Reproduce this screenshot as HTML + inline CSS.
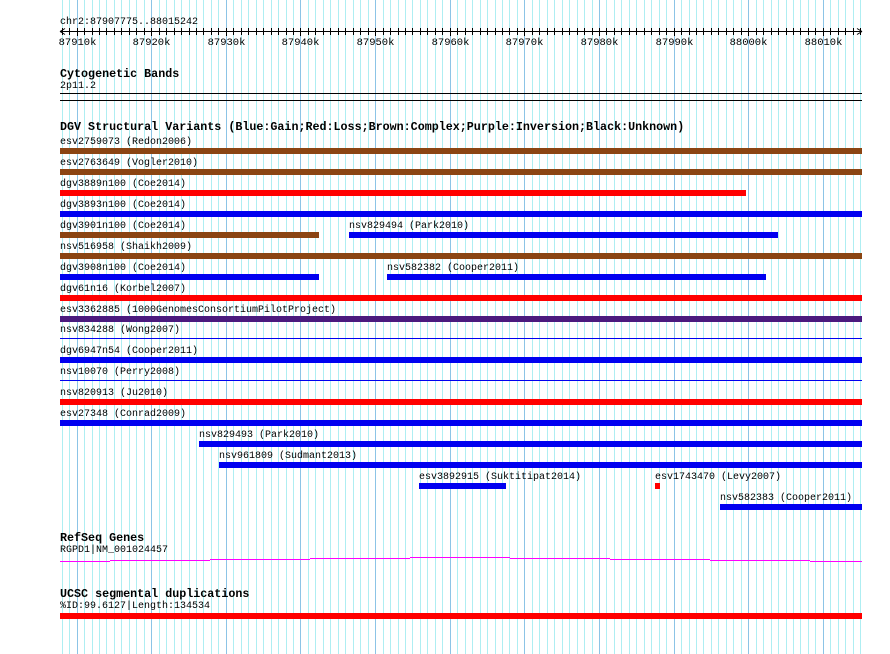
<!DOCTYPE html>
<html><head><meta charset="utf-8">
<style>
html,body{margin:0;padding:0;background:#fff;width:890px;height:654px;overflow:hidden}
#c{position:relative;width:890px;height:654px}
.t{position:absolute;font-family:"Liberation Mono",monospace;font-size:10px;line-height:11px;color:#000;white-space:nowrap;left:60px}
.h{position:absolute;font-family:"Liberation Mono",monospace;font-size:11.7px;font-weight:bold;line-height:12px;color:#000;white-space:nowrap;left:60px}
.b{position:absolute;height:6px}
.l{position:absolute;background:#000}
svg{position:absolute;left:0;top:0}
</style></head><body><div id="c">
<svg id="g" width="890" height="654"></svg>
<div class="t" style="top:17px">chr2:87907775..88015242</div>
<div class="h" style="top:68px">Cytogenetic Bands</div>
<div class="t" style="top:81px">2p11.2</div>
<div class="l" style="left:60px;width:802px;top:93px;height:1px"></div>
<div class="l" style="left:60px;width:802px;top:100px;height:1px"></div>
<div class="h" style="top:121px">DGV Structural Variants (Blue:Gain;Red:Loss;Brown:Complex;Purple:Inversion;Black:Unknown)</div>
<div id="rows"></div>
<div class="h" style="top:532px">RefSeq Genes</div>
<div class="t" style="top:545px">RGPD1|NM_001024457</div>
<div class="h" style="top:588px">UCSC segmental duplications</div>
<div class="t" style="top:601px">%ID:99.6127|Length:134534</div>
<div class="b" style="left:60px;width:802px;top:613px;background:#f00"></div>
</div>
<script>
var g=document.getElementById('g');
function X(bp){return 60+(bp-87907775)*802/107467;}
var s='';
for(var k=87908;k<=88015;k++){var x=Math.round(X(k*1000))+0.5;var maj=(k%10==0);
s+='<line x1="'+x+'" y1="0" x2="'+x+'" y2="654" stroke="'+(maj?'#8cc4e6':'#aeeef2')+'" stroke-width="1"/>';}
s+='<line x1="60" y1="31.5" x2="862" y2="31.5" stroke="#000"/>';
s+='<path d="M60 31.5 L65 28.5 M60 31.5 L65 34.5 M862 31.5 L857 28.5 M862 31.5 L857 34.5" stroke="#000" fill="none"/>';
for(var k=87908;k<=88015;k++){var x=Math.round(X(k*1000))+0.5;var maj=(k%10==0);
s+='<line x1="'+x+'" y1="28" x2="'+x+'" y2="'+(maj?36:35)+'" stroke="#000"/>';
if(maj){s+='<text x="'+x+'" y="45" text-anchor="middle" font-family="Liberation Mono, monospace" font-size="10.5">'+k+'k</text>';}}
var segs=[[60,110,561],[110,210,560],[210,310,559],[310,410,558],[410,510,557],[510,610,558],[610,710,559],[710,810,560],[810,862,561]];
segs.forEach(function(a){s+='<line x1="'+a[0]+'" y1="'+(a[2]+0.5)+'" x2="'+a[1]+'" y2="'+(a[2]+0.5)+'" stroke="#f0f"/>';});
g.innerHTML=s;
var B='#0000f0',R='#f00',N='#8b4513',P='#4b1a7e';
var rows=[
[[60,862,N,'esv2759073 (Redon2006)']],
[[60,862,N,'esv2763649 (Vogler2010)']],
[[60,746,R,'dgv3889n100 (Coe2014)']],
[[60,862,B,'dgv3893n100 (Coe2014)']],
[[60,319,N,'dgv3901n100 (Coe2014)'],[349,778,B,'nsv829494 (Park2010)']],
[[60,862,N,'nsv516958 (Shaikh2009)']],
[[60,319,B,'dgv3908n100 (Coe2014)'],[387,766,B,'nsv582382 (Cooper2011)']],
[[60,862,R,'dgv61n16 (Korbel2007)']],
[[60,862,P,'esv3362885 (1000GenomesConsortiumPilotProject)']],
[[60,862,'thin','nsv834288 (Wong2007)']],
[[60,862,B,'dgv6947n54 (Cooper2011)']],
[[60,862,'thin','nsv10070 (Perry2008)']],
[[60,862,R,'nsv820913 (Ju2010)']],
[[60,862,B,'esv27348 (Conrad2009)']],
[[199,862,B,'nsv829493 (Park2010)']],
[[219,862,B,'nsv961809 (Sudmant2013)']],
[[419,506,B,'esv3892915 (Suktitipat2014)'],[655,660,R,'esv1743470 (Levy2007)']],
[[720,862,B,'nsv582383 (Cooper2011)']]
];
var h='';
rows.forEach(function(r,i){var bt=148+21*i-(i>8?1:0);
r.forEach(function(b){
h+='<div class="t" style="left:'+b[0]+'px;top:'+(bt-11)+'px">'+b[3]+'</div>';
if(b[2]=='thin')h+='<div class="b" style="left:'+b[0]+'px;width:'+(b[1]-b[0])+'px;top:'+(bt+2)+'px;height:1px;background:'+B+'"></div>';
else h+='<div class="b" style="left:'+b[0]+'px;width:'+(b[1]-b[0])+'px;top:'+bt+'px;background:'+b[2]+'"></div>';
});});
document.getElementById('rows').innerHTML=h;
</script>
</body></html>
